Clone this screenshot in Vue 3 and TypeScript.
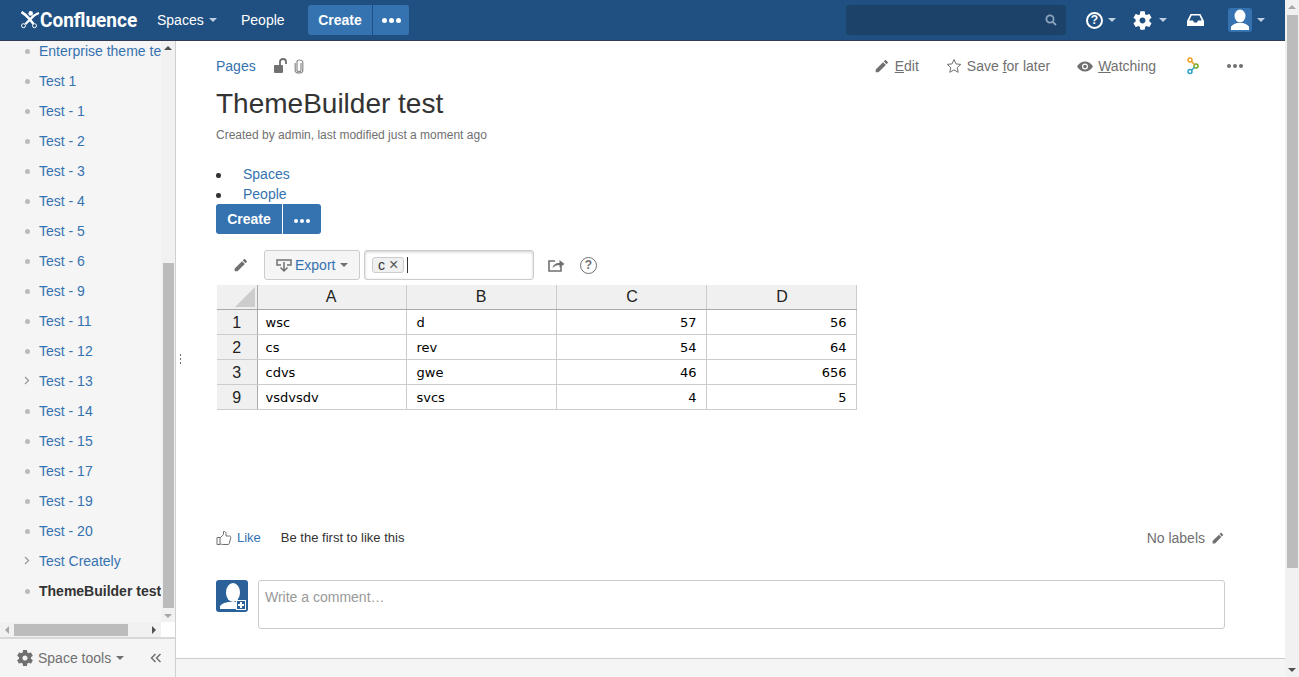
<script setup lang="ts">
const gear = "M19.14 12.94c.04-.3.06-.61.06-.94 0-.32-.02-.64-.07-.94l2.03-1.58c.18-.14.23-.41.12-.61l-1.92-3.32c-.12-.22-.37-.29-.59-.22l-2.39.96c-.5-.38-1.03-.7-1.62-.94l-.36-2.54c-.04-.24-.24-.41-.48-.41h-3.84c-.24 0-.43.17-.47.41l-.36 2.54c-.59.24-1.13.57-1.62.94l-2.39-.96c-.22-.08-.47 0-.59.22L2.74 8.87c-.12.21-.08.47.12.61l2.03 1.58c-.05.3-.09.63-.09.94s.02.64.07.94l-2.03 1.58c-.18.14-.23.41-.12.61l1.92 3.32c.12.22.37.29.59.22l2.39-.96c.5.38 1.03.7 1.62.94l.36 2.54c.05.24.24.41.48.41h3.84c.24 0 .44-.17.47-.41l.36-2.54c.59-.24 1.13-.56 1.62-.94l2.39.96c.22.08.47 0 .59-.22l1.92-3.32c.12-.22.07-.47-.12-.61l-2.01-1.58zM12 15.1c-1.7 0-3.100-1.400-3.100-3.100s1.400-3.100 3.100-3.100 3.100 1.400 3.100 3.100-1.400 3.100-3.100 3.100z";
const pencil = "M1 15v4h4L15.5 8.5l-4-4L1 15zM18.2 5.8c.5-.5.5-1.1 0-1.6l-2.4-2.4c-.5-.5-1.1-.5-1.6 0l-1.7 1.7 4 4 1.7-1.7z";
const nav = [
  "Enterprise theme test", "Test 1", "Test - 1", "Test - 2", "Test - 3", "Test - 4", "Test - 5", "Test - 6",
  "Test - 9", "Test - 11", "Test - 12", "Test - 13", "Test - 14", "Test - 15", "Test - 17", "Test - 19",
  "Test - 20", "Test Creately", "ThemeBuilder test",
].map((label) => ({
  label,
  expandable: label === "Test - 13" || label === "Test Creately",
  current: label === "ThemeBuilder test",
}));
const rows = [
  { id: 1, a: "wsc", b: "d", c: 57, d: 56 },
  { id: 2, a: "cs", b: "rev", c: 54, d: 64 },
  { id: 3, a: "cdvs", b: "gwe", c: 46, d: 656 },
  { id: 9, a: "vsdvsdv", b: "svcs", c: 4, d: 5 },
];
</script>

<template>
  <div class="page">
    <div class="viewport">
      <header class="topbar">
        <a class="logo">
          <svg class="logo-mark" width="21" height="18" viewBox="0 0 21 18" fill="none" stroke="#fff">
            <circle cx="11.700" cy="2.400" r="2.300" fill="#fff" stroke="none" />
            <path d="M2.500 1c3.500 2 6 4.500 8 7l4 5" stroke-width="2.600" />
            <path d="M20 2c-3.500 1-6 3-8 5.500L6.500 13" stroke-width="2.300" />
            <circle cx="4.500" cy="14.700" r="2" stroke-width="1" />
            <circle cx="15.500" cy="14.700" r="2" stroke-width="1" />
          </svg>
          <span class="logo-text">Confluence</span>
        </a>
        <span class="top-link spaces">Spaces<i class="caret light"></i></span>
        <span class="top-link people">People</span>
        <div class="btn-group top-create">
          <span class="btn-main">Create</span>
          <span class="btn-more"><i></i><i></i><i></i></span>
        </div>
        <div class="search">
          <svg width="12" height="12" viewBox="0 0 12 12" fill="none" stroke="#8ba3bd" stroke-width="1.8"><circle cx="5" cy="5" r="3.6" /><path d="M7.8 7.8 11 11" /></svg>
        </div>
        <span class="help-icon">?</span><i class="caret light c-help"></i>
        <svg class="gear-icon" width="23" height="23" viewBox="0 0 24 24" fill="#fff"><path :d="gear" /></svg><i class="caret light c-gear"></i>
        <svg class="inbox" width="17" height="14" viewBox="0 0 17 14"><path d="M3.500 1h10L17 8v5H0V8zM4.600 2.600 2.300 7.600H6l1 2h3l1-2h3.700L12.400 2.600z" fill="#fff" fill-rule="evenodd" /></svg>
        <span class="avatar-top">
          <svg width="24" height="24" viewBox="0 0 24 24" fill="#fff"><ellipse cx="12" cy="8" rx="5.500" ry="6.500" /><path d="M3 22v-2.500c0-2 3-3.500 6-4.500h6c3 1 6 2.500 6 4.500V22z" /></svg>
        </span><i class="caret light c-av"></i>
      </header>

      <div class="body">
        <aside class="sidebar">
          <div class="tree-area">
            <div class="tree-clip">
              <ul class="tree">
                <li v-for="item in nav" :key="item.label" class="tree-item">
                  <svg v-if="item.expandable" class="chev" width="6" height="9" viewBox="0 0 6 9" fill="none" stroke="#999" stroke-width="1.300"><path d="M1 1l3.500 3.500L1 8" /></svg>
                  <i v-else class="dot"></i>
                  <span :class="item.current ? 'current' : 'tree-link'">{{ item.label }}</span>
                </li>
              </ul>
            </div>
            <div class="vbar">
              <i class="arrow up dark"></i>
              <div class="vtrack"><div class="vthumb"></div></div>
              <i class="arrow down"></i>
            </div>
          </div>
          <div class="hbar-row">
            <div class="hbar">
              <i class="arrow left"></i>
              <div class="hthumb"></div>
              <i class="arrow right"></i>
            </div>
          </div>
          <div class="space-tools">
            <svg width="20" height="20" viewBox="0 0 24 24" fill="#707070"><path :d="gear" /></svg>
            <span class="st-label">Space tools</span><i class="caret grey"></i>
            <span class="collapse">
              <svg width="12" height="10" viewBox="0 0 12 10" fill="none" stroke="#707070" stroke-width="1.500"><path d="M5.500 1 1.500 5l4 4M10.500 1l-4 4 4 4" /></svg>
            </span>
          </div>
        </aside>

        <main class="main">
          <div class="splitter"><i></i><i></i><i></i></div>
          <div class="content">
            <div class="crumbs">
              <a class="link">Pages</a>
              <svg class="lock" width="14" height="15" viewBox="0 0 14 15"><rect x="0" y="7" width="9" height="8" rx="1" fill="#707070" /><path d="M6 7V3.500C6 2 7.200 1 9 1s3 1 3 2.500V6" fill="none" stroke="#707070" stroke-width="1.800" /></svg>
              <svg class="clip" width="10" height="15" viewBox="0 0 10 15" fill="none" stroke="#8a8a8a" stroke-width="1.200"><path d="M7 4v7c0 1-.8 1.600-2 1.600S3 12 3 11V3c0-1.200 1-2 2.200-2S8.800 1.800 8.800 3v8.500C8.800 13 7 14 5 14s-3.800-1-3.800-2.500V4" /></svg>
              <div class="actions">
                <span class="act edit"><svg width="14" height="14" viewBox="0 0 20 20" fill="#707070"><path :d="pencil" /></svg><span><u>E</u>dit</span></span>
                <span class="act save"><svg width="16" height="16" viewBox="0 0 16 16" fill="none" stroke="#707070"><path d="M8 1.500l2 4.400 4.800.5-3.600 3.200 1 4.700L8 11.900l-4.200 2.400 1-4.700L1.200 6.400 6 5.900z" /></svg><span>Save <u>f</u>or later</span></span>
                <span class="act watch"><svg width="16" height="11" viewBox="0 0 16 11"><path d="M0 5.500C2 2 5 .5 8 .5s6 1.500 8 5c-2 3.500-5 5-8 5s-6-1.500-8-5zM8 2.500a3 3 0 100 6 3 3 0 000-6z" fill="#707070" fill-rule="evenodd" /><circle cx="8" cy="5.500" r="1.800" fill="#707070" /></svg><span><u>W</u>atching</span></span>
                <svg class="flow" width="13" height="18" viewBox="0 0 13 18" fill="none" stroke-width="1.500">
                  <circle cx="3" cy="3" r="2" stroke="#f0a020" /><circle cx="9" cy="9" r="2" stroke="#70a820" /><circle cx="3" cy="14.500" r="2" stroke="#28a0c8" />
                  <path d="M4.500 4.500 7.500 7.500" stroke="#f0a020" /><path d="M7.500 10.500 4.500 13" stroke="#28a0c8" />
                </svg>
                <span class="more-dots"><i></i><i></i><i></i></span>
              </div>
            </div>
            <h1 class="title">ThemeBuilder test</h1>
            <p class="meta">Created by admin, last modified just a moment ago</p>

            <ul class="plain-list">
              <li><a class="link">Spaces</a></li>
              <li><a class="link">People</a></li>
            </ul>
            <div class="btn-group body-create">
              <span class="btn-main">Create</span>
              <span class="btn-more"><i></i><i></i><i></i></span>
            </div>

            <div class="toolbar">
              <svg class="tb-pencil" width="14" height="14" viewBox="0 0 20 20" fill="#707070"><path :d="pencil" /></svg>
              <span class="export">
                <svg width="16" height="15" viewBox="0 0 16 15" fill="none" stroke="#707070" stroke-width="1.500"><path d="M5 2H1v5h4M11 2h4v5h-4M5 2h6" /><path d="M8 4v9M4.500 9.500 8 13l3.500-3.500" /></svg>
                <span class="export-label">Export</span><i class="caret grey"></i>
              </span>
              <div class="filter">
                <span class="chip">c<b>×</b></span><i class="cursor"></i>
              </div>
              <svg class="share" width="17" height="14" viewBox="0 0 17 14" fill="none" stroke="#707070" stroke-width="1.600"><path d="M7 3H1v10h12V8" /><path d="M4.500 10c.5-3 3-5 7-5V2l5 4-5 3.500V7c-3 0-5 1-7 3z" fill="#707070" stroke="none" /></svg>
              <span class="tb-help">?</span>
            </div>

            <table class="sheet">
              <colgroup><col class="c0" /><col class="c1" /><col class="cn" /><col class="cn" /><col class="cn" /></colgroup>
              <thead>
                <tr>
                  <th class="corner"><i></i></th>
                  <th>A</th><th>B</th><th>C</th><th>D</th>
                </tr>
              </thead>
              <tbody>
                <tr v-for="r in rows" :key="r.id">
                  <th class="rowhead">{{ r.id }}</th>
                  <td>{{ r.a }}</td><td>{{ r.b }}</td>
                  <td class="num">{{ r.c }}</td><td class="num">{{ r.d }}</td>
                </tr>
              </tbody>
            </table>

            <div class="like-row">
              <svg width="16" height="16" viewBox="0 0 16 16" fill="none" stroke="#707070" stroke-width="1"><path d="M1 7.500h3v7H1zM4 8l3.500-3.500V1.500c1.500-.3 2.500.8 2.500 2.200V6h3.500c1 0 1.600.8 1.300 1.700l-1.500 5.800c-.2.600-.7 1-1.300 1H6.500c-1 0-1.500-.6-2.500-.6" /></svg>
              <a class="link like">Like</a>
              <span class="first">Be the first to like this</span>
              <span class="labels">No labels<svg width="12" height="12" viewBox="0 0 20 20" fill="#707070"><path :d="pencil" /></svg></span>
            </div>

            <div class="comment-row">
              <span class="avatar-comment">
                <svg width="32" height="32" viewBox="0 0 32 32">
                  <ellipse cx="17" cy="12.500" rx="7" ry="9.500" fill="#fff" /><path d="M4 29v-2c0-2.500 4-4 8-5h9c2 .5 4 1.500 5 2.500V29z" fill="#fff" />
                </svg>
                <b class="plus"></b>
              </span>
              <div class="comment-box">Write a comment…</div>
            </div>
          </div>
          <div class="footer-band"></div>
        </main>
      </div>
    </div>
    <div class="page-scroll">
      <i class="arrow up"></i>
      <div class="page-track"><div class="page-thumb"></div></div>
      <i class="arrow down dark"></i>
    </div>
  </div>
</template>

<style>
html, body { margin: 0; overflow: hidden; }
</style>

<style scoped>
* { box-sizing: border-box; }
.page { display: flex; width: 1299px; height: 677px; overflow: hidden; background: #fff; font: 14px/20px "Liberation Sans", Arial, sans-serif; color: #333; }
.viewport { width: 1285px; display: flex; flex-direction: column; }
.page-scroll { width: 14px; background: #f1f1f1; display: flex; flex-direction: column; align-items: center; }
.page-track { flex: 1; width: 100%; padding: 0 1px 0 2px; }
.page-thumb { height: 553px; background: #bcbcbc; }
.arrow { display: block; width: 0; height: 0; flex: none; border-style: solid; border-color: transparent; }
.arrow.up { border-width: 0 4px 4px; border-bottom-color: #a8a8a8; margin: 5px 0 6px; }
.arrow.down { border-width: 4px 4px 0; border-top-color: #a8a8a8; margin: 6px 0 5px; }
.arrow.up.dark { border-bottom-color: #505050; }
.arrow.down.dark { border-top-color: #505050; }
.arrow.left { border-width: 4px 4px 4px 0; border-right-color: #a8a8a8; margin: 0 5px; }
.arrow.right { border-width: 4px 0 4px 4px; border-left-color: #505050; margin-left: auto; margin-right: 5px; }

.topbar { height: 41px; flex: none; background: #205081; border-bottom: 1px solid #2e3d54; display: flex; align-items: center; color: #fff; position: relative; }
.logo { display: flex; align-items: center; margin-left: 19px; width: 138px; }
.logo-text { font: 700 20px/24px Roboto, sans-serif; transform: scaleX(.95); transform-origin: left center; white-space: nowrap; }
.top-link { font-size: 14px; display: flex; align-items: center; }
.spaces { width: 84px; }
.people { width: 67px; }
.caret { display: inline-block; width: 0; height: 0; border-style: solid; border-width: 4px 4px 0; border-color: transparent; flex: none; }
.caret.light { border-top-color: #c0d0e0; margin-left: 5px; }
.caret.grey { border-top-color: #707070; margin-left: 5px; }
.btn-group { display: flex; border-radius: 3px; overflow: hidden; font-weight: 700; color: #fff; background: #3572b0; height: 30px; }
.btn-main { display: flex; align-items: center; justify-content: center; border-right: 1px solid #fff; }
.btn-more { display: flex; align-items: center; justify-content: center; gap: 2px; }
.btn-more i { width: 5px; height: 5px; border-radius: 50%; background: #fff; }
.top-create { width: 101px; }
.top-create .btn-main { width: 65px; border-right-color: #205081; }
.top-create .btn-more { flex: 1; }
.search { width: 220px; height: 30px; margin-left: 437px; border-radius: 3px; background: #1c4269; display: flex; align-items: center; justify-content: flex-end; padding-right: 9px; }
.help-icon { width: 17px; height: 17px; margin-left: 20px; border: 2px solid #fff; border-radius: 50%; font: 700 12px/13px "Liberation Sans", sans-serif; text-align: center; }
.c-help { margin-left: 4px; }
.gear-icon { margin-left: 15px; }
.c-gear { margin-left: 2px; }
.inbox { margin-left: 20px; }
.avatar-top { width: 24px; height: 24px; margin-left: 24px; background: #3572b0; border-radius: 3px; display: flex; align-items: flex-end; justify-content: center; overflow: hidden; }
.c-av { margin-left: 5px; }

.body { flex: 1; min-height: 0; display: flex; }
.sidebar { width: 176px; flex: none; background: #f5f5f5; border-right: 1px solid #d0d0d0; display: flex; flex-direction: column; }
.tree-area { flex: 1; min-height: 0; display: flex; }
.tree-clip { width: 161px; overflow: hidden; }
.tree { list-style: none; margin: -5px 0 0; padding: 0; width: 260px; }
.tree-item { height: 30px; display: flex; align-items: center; position: relative; padding-left: 39px; white-space: nowrap; }
.dot { position: absolute; left: 25px; top: 13px; width: 5px; height: 5px; border-radius: 50%; background: #bbb; }
.chev { position: absolute; left: 24px; top: 10px; }
.tree-link, .link { color: #3572b0; }
.current { font-weight: 700; color: #333; }
.vbar { width: 14px; background: #f1f1f1; display: flex; flex-direction: column; align-items: center; }
.vtrack { flex: 1; width: 100%; padding: 207px 1px 0 2px; }
.vthumb { height: 345px; background: #bcbcbc; }
.hbar-row { height: 15px; flex: none; background: #fff; }
.hbar { width: 161px; height: 15px; background: #f1f1f1; display: flex; align-items: center; }
.hthumb { width: 114px; height: 12px; background: #bcbcbc; margin-left: 5px; }
.hbar .arrow.left { margin-right: 0; margin-left: 5px; }
.space-tools { height: 40px; flex: none; border-top: 2px solid #d8d8d8; display: flex; align-items: center; padding-left: 15px; color: #707070; }
.st-label { margin-left: 3px; }
.collapse { margin-left: auto; margin-right: 13px; display: flex; }

.main { flex: 1; min-width: 0; display: flex; flex-direction: column; position: relative; }
.splitter { position: absolute; left: 4px; top: 313px; display: flex; flex-direction: column; gap: 2px; }
.splitter i { width: 1px; height: 2px; background: #707070; }
.content { flex: 1; min-height: 0; padding: 15px 60px 0 40px; }
.footer-band { height: 19px; flex: none; background: #f5f5f5; border-top: 1px solid #ccc; }
.crumbs { height: 20px; display: flex; align-items: center; }
.lock { margin-left: 18px; margin-top: -1px; }
.clip { margin-left: 6px; }
.actions { margin-left: auto; margin-right: -18px; display: flex; align-items: center; color: #707070; }
.act { display: flex; align-items: center; }
.edit { gap: 6px; }
.save { gap: 5px; margin-left: 27px; }
.watch { gap: 5px; margin-left: 27px; }
.flow { margin-left: 31px; }
.more-dots { display: flex; gap: 2px; margin-left: 27px; }
.more-dots i { width: 4px; height: 4px; border-radius: 50%; background: #707070; }
.title { font: 400 28px/32px "Liberation Sans", sans-serif; color: #333; margin: 12px 0 0; }
.meta { margin: 5px 0 0; font-size: 12px; line-height: 20px; color: #707070; }
.plain-list { list-style: none; margin: 19px 0 0; padding: 0 0 0 27px; color: #333; }
.plain-list li { height: 20px; position: relative; }
.plain-list li::before { content: ""; position: absolute; left: -27px; top: 9px; width: 4.500px; height: 4.500px; border-radius: 50%; background: #333; }
.body-create { width: 105px; margin-top: 0; }
.body-create .btn-main { width: 67px; }
.body-create .btn-more { flex: 1; padding-top: 4px; }
.body-create .btn-more i { width: 4px; height: 4px; }
.toolbar { height: 30px; margin-top: 16px; display: flex; align-items: center; }
.tb-pencil { margin-left: 18px; }
.export { width: 96px; height: 30px; margin-left: 16px; border: 1px solid #ccc; border-radius: 3px; background: #f5f5f5; display: flex; align-items: center; padding-left: 11px; color: #3572b0; }
.export-label { margin-left: 3px; }
.filter { width: 170px; height: 30px; margin-left: 4px; border: 1px solid #ccc; border-radius: 3px; box-shadow: inset 0 1px 3px #ccc; display: flex; align-items: center; padding-left: 7px; }
.chip { height: 16px; width: 32px; border: 1px solid #ccc; border-radius: 3px; background: #f0f0f0; font-size: 14px; line-height: 14px; padding-left: 5px; display: flex; gap: 4px; color: #333; }
.chip b { font-weight: 400; color: #555; font-size: 16px; }
.cursor { width: 1px; height: 16px; background: #333; margin-left: 3px; }
.share { margin-left: 14px; }
.tb-help { width: 17px; height: 17px; margin-left: 15px; border: 1.500px solid #707070; border-radius: 50%; color: #707070; font: 700 12px/14px "Liberation Sans", sans-serif; text-align: center; }
.sheet { margin: 5px 0 0 1px; border-collapse: collapse; table-layout: fixed; width: 639px; font: 13px/23px "DejaVu Sans", sans-serif; color: #000; }
.c0 { width: 40px; }
.c1 { width: 149px; }
.cn { width: 150px; }
.sheet th, .sheet td { padding: 0; height: 25px; border: 1px solid #ccc; font-weight: 400; }
.sheet thead th { height: 24px; padding-top: 1px; background: #f0f0f0; font: 16px/22px "Liberation Sans", sans-serif; color: #222; border-top: 0; border-bottom-color: #aaa; }
.sheet thead th:nth-child(n + 4) { padding-left: 2px; }
.sheet thead th:nth-child(2) { padding-right: 1px; }
.sheet thead th:first-child, .sheet .rowhead { background: #f0f0f0; border-left: 0; border-right-color: #aaa; }
.sheet thead th:first-child { padding: 0; }
.sheet .rowhead { padding-top: 1px; font: 16px/23px "Liberation Sans", sans-serif; color: #222; }
.sheet td { padding: 1px 9px 0 8px; }
.sheet td:nth-child(3) { padding-left: 10px; }
.sheet td.num { text-align: right; }
.corner { position: relative; }
.corner i { position: absolute; right: 2px; bottom: 2px; width: 0; height: 0; border-style: solid; border-width: 0 0 20px 20px; border-color: transparent transparent #ccc transparent; }
.like-row { margin-top: 118px; height: 20px; display: flex; align-items: center; font-size: 13px; color: #333; }
.like { margin-left: 5px; }
.first { margin-left: 20px; }
.labels { margin-left: auto; margin-right: 1px; color: #707070; font-size: 14px; display: flex; align-items: center; gap: 7px; }
.comment-row { margin-top: 32px; display: flex; gap: 10px; }
.avatar-comment { width: 32px; height: 32px; flex: none; background: #2a6199; border-radius: 3px; position: relative; overflow: hidden; }
.avatar-comment svg { display: block; }
.plus { position: absolute; right: 2px; bottom: 2px; width: 10px; height: 10px; border: 1px solid #fff; background: linear-gradient(#fff, #fff) center / 6px 2px no-repeat, linear-gradient(#fff, #fff) center / 2px 6px no-repeat, #2a6199; }
.comment-box { flex: 1; height: 49px; border: 1px solid #ccc; border-radius: 3px; padding: 6px; color: #999; font-size: 14px; }
</style>
